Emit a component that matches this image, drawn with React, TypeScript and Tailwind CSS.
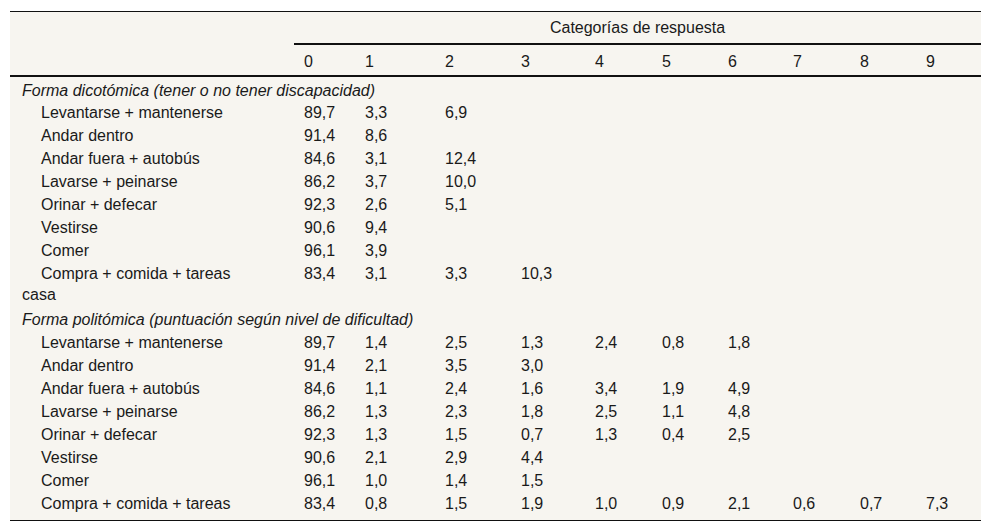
import React from 'react';

type Row = { label: string; values: string[] };

const dicotomica: Row[] = [
  { label: 'Levantarse + mantenerse', values: ['89,7', '3,3', '6,9'] },
  { label: 'Andar dentro', values: ['91,4', '8,6'] },
  { label: 'Andar fuera + autobús', values: ['84,6', '3,1', '12,4'] },
  { label: 'Lavarse + peinarse', values: ['86,2', '3,7', '10,0'] },
  { label: 'Orinar + defecar', values: ['92,3', '2,6', '5,1'] },
  { label: 'Vestirse', values: ['90,6', '9,4'] },
  { label: 'Comer', values: ['96,1', '3,9'] },
  { label: 'Compra + comida + tareas casa', values: ['83,4', '3,1', '3,3', '10,3'] },
];

const politomica: Row[] = [
  { label: 'Levantarse + mantenerse', values: ['89,7', '1,4', '2,5', '1,3', '2,4', '0,8', '1,8'] },
  { label: 'Andar dentro', values: ['91,4', '2,1', '3,5', '3,0'] },
  { label: 'Andar fuera + autobús', values: ['84,6', '1,1', '2,4', '1,6', '3,4', '1,9', '4,9'] },
  { label: 'Lavarse + peinarse', values: ['86,2', '1,3', '2,3', '1,8', '2,5', '1,1', '4,8'] },
  { label: 'Orinar + defecar', values: ['92,3', '1,3', '1,5', '0,7', '1,3', '0,4', '2,5'] },
  { label: 'Vestirse', values: ['90,6', '2,1', '2,9', '4,4'] },
  { label: 'Comer', values: ['96,1', '1,0', '1,4', '1,5'] },
  { label: 'Compra + comida + tareas', values: ['83,4', '0,8', '1,5', '1,9', '1,0', '0,9', '2,1', '0,6', '0,7', '7,3'] },
];

const colWidths = ['w-[61px]', 'w-[80px]', 'w-[76px]', 'w-[74px]', 'w-[67px]', 'w-[66px]', 'w-[65px]', 'w-[67px]', 'w-[66px]', 'w-[65px]'];

const DataRow = ({ row, pad }: { row: Row; pad: string }) => (
  <tr className="align-top">
    <td className={`pl-3 pt-px ${pad}`}>
      <div className="w-[225px] indent-[19px]">{row.label}</div>
    </td>
    {colWidths.map((_, i) => (
      <td key={i} className={`pl-[10px] pt-px ${pad}`}>
        {row.values[i] ?? ''}
      </td>
    ))}
  </tr>
);

const SectionRow = ({ title, first }: { title: string; first?: boolean }) => (
  <tr>
    <td colSpan={11} className={`pl-3 italic ${first ? 'pt-[3px] pb-0' : 'py-px'}`}>
      {title}
    </td>
  </tr>
);

export default function App() {
  return (
    <div className="bg-white w-[992px] h-[532px] pt-[11px] pl-[10px]">
      <table
        className="w-[971px] table-fixed border-collapse bg-[#f7f5f0] text-[16px] leading-[21px] text-[#1a1a1a]"
        style={{ fontFamily: '"Liberation Sans", Arial, sans-serif' }}
      >
        <colgroup>
          <col className="w-[284px]" />
          {colWidths.map((w, i) => (
            <col key={i} className={w} />
          ))}
        </colgroup>
        <thead>
          <tr className="border-t border-[#111]">
            <th className="h-[32px]" />
            <th colSpan={10} className="h-[32px] font-normal text-center border-b-2 border-[#111]">
              Categorías de respuesta
            </th>
          </tr>
          <tr className="border-b-2 border-[#111]">
            <th className="h-[32px]" />
            {colWidths.map((_, i) => (
              <th key={i} className="h-[32px] pt-[4px] font-normal text-left pl-[10px]">
                {i}
              </th>
            ))}
          </tr>
        </thead>
        <tbody>
          <SectionRow title="Forma dicotómica (tener o no tener discapacidad)" first />
          {dicotomica.map((r, i) => (
            <DataRow key={r.label} row={r} pad={i === dicotomica.length - 1 ? 'pb-[3px]' : 'pb-px'} />
          ))}
          <SectionRow title="Forma politómica (puntuación según nivel de dificultad)" />
          {politomica.map((r, i) => (
            <DataRow key={r.label} row={r} pad={i === politomica.length - 1 ? 'pb-[6px]' : 'pb-px'} />
          ))}
          <tr className="border-t border-[#111]">
            <td colSpan={11} className="h-0 p-0" />
          </tr>
        </tbody>
      </table>
    </div>
  );
}
